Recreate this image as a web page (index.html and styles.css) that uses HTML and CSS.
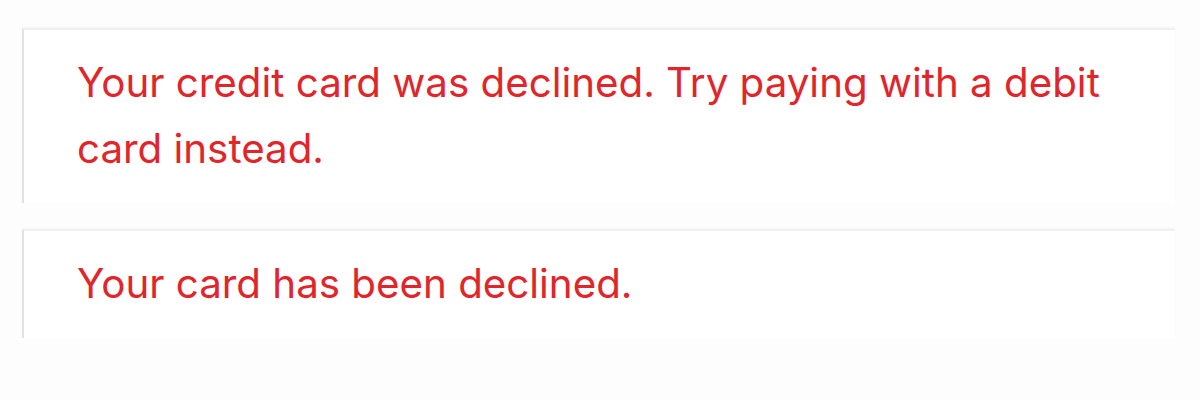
FILE: index.html
```html
<!DOCTYPE html>
<html lang="en">
<head>
<meta charset="utf-8">
<link rel="stylesheet" href="styles.css">
</head>
<body>
<div class="list">
  <div class="card"><p class="msg">Your credit card was declined. Try paying with a debit card instead.</p></div>
  <div class="card"><p class="msg">Your card has been declined.</p></div>
</div>
</body>
</html>
```
FILE: styles.css
```css
html, body {
  margin: 0;
  padding: 0;
  background: #fdfdfd;
}
.list {
  display: flex;
  flex-direction: column;
  gap: 26px;
  padding: 28px 25px 0 22px;
}
.card {
  background: #ffffff;
  border-left: 2px solid #e2e2e2;
  border-top: 2px solid #f0f0f0;
  box-shadow: 0 -1px 2px rgba(0, 0, 0, 0.03);
  padding: 20px 60px 21px 53px;
}
.msg {
  margin: 0;
  font-family: Inter, "Noto Sans", sans-serif;
  font-size: 40.3px;
  line-height: 66px;
  color: #e0252b;
}
```
